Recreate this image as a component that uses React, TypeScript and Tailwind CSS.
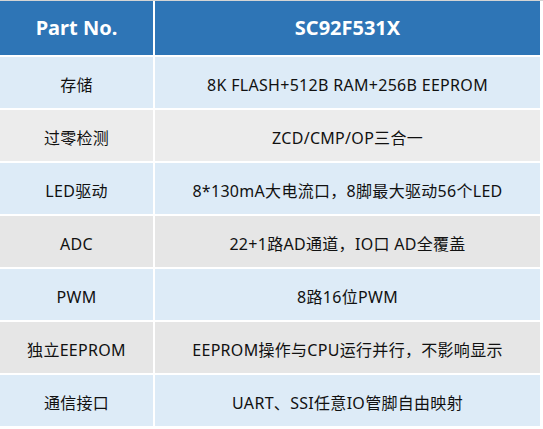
import React from 'react';

const rows: { label: string; value: string; bg: string }[] = [
  { label: '存储', value: '8K FLASH+512B RAM+256B EEPROM', bg: 'bg-[#ddebf7]' },
  { label: '过零检测', value: 'ZCD/CMP/OP三合一', bg: 'bg-[#ececec]' },
  { label: 'LED驱动', value: '8*130mA大电流口，8脚最大驱动56个LED', bg: 'bg-[#ddebf7]' },
  { label: 'ADC', value: '22+1路AD通道，IO口 AD全覆盖', bg: 'bg-[#e6e6e6]' },
  { label: 'PWM', value: '8路16位PWM', bg: 'bg-[#ddebf7]' },
  { label: '独立EEPROM', value: 'EEPROM操作与CPU运行并行，不影响显示', bg: 'bg-[#e6e6e6]' },
  { label: '通信接口', value: 'UART、SSI任意IO管脚自由映射', bg: 'bg-[#ddebf7]' },
];

const App: React.FC = () => {
  return (
    <div
      className="w-[543px] h-[429px] bg-white border-t border-[#d4d4d4] pr-[3px] text-[#111] overflow-hidden"
      style={{ fontFamily: '"Noto Sans", "Noto Sans CJK SC", sans-serif' }}
    >
      <div className="grid grid-cols-[153px_1fr] gap-x-[2px] gap-y-[2px]">
        {/* header */}
        <div className="h-[54px] bg-[#2e75b6] flex items-center justify-center text-white text-[20px] font-bold">
          Part No.
        </div>
        <div className="h-[54px] bg-[#2e75b6] flex items-center justify-center text-white text-[20px] font-bold">
          SC92F531X
        </div>

        {rows.map(row => (
          <React.Fragment key={row.label}>
            <div className={`h-[51px] ${row.bg} flex items-center justify-center text-[16px] tracking-[0.3px] pt-[4px]`}>
              {row.label}
            </div>
            <div className={`h-[51px] ${row.bg} flex items-center justify-center text-[16px] tracking-[0.3px] pt-[4px]`}>
              {row.value}
            </div>
          </React.Fragment>
        ))}
      </div>
    </div>
  );
};

export default App;
